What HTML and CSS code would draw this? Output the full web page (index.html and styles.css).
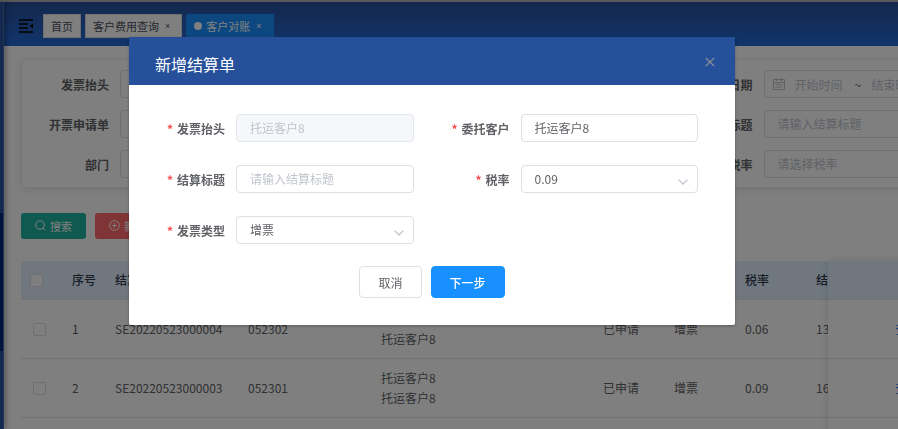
FILE: index.html
```html
<!DOCTYPE html>
<html lang="zh-CN">
<head>
    <meta charset="UTF-8">
    <meta name="viewport" content="width=device-width, initial-scale=1.0">
    <title>客户对账</title>
    <link rel="stylesheet" href="styles.css">
</head>
<body>
    <div class="app">
        <div class="sidebar">
            <div class="sidebar-top"></div>
            <div class="sidebar-open"></div>
        </div>

        <div class="main">
            <!-- Top bar with page tabs -->
            <header class="topbar">
                <svg class="fold-icon" viewBox="0 0 15 14" width="15" height="14">
                    <path d="M0 1h14M0 5h9M0 9h9M0 13h14" stroke="#000" stroke-width="1.6" fill="none"/>
                    <path d="M14 4.5v5L10.5 7z" fill="#000"/>
                </svg>
                <nav class="tabs">
                    <a href="#" class="tab">首页</a>
                    <a href="#" class="tab closable">客户费用查询<span class="tab-close">×</span></a>
                    <a href="#" class="tab closable active"><i class="dot"></i>客户对账<span class="tab-close">×</span></a>
                </nav>
            </header>

            <div class="content">
                <!-- Search form -->
                <form class="search-card">
                    <div class="field"><label for="sTitle">发票抬头</label><input id="sTitle" class="control" type="text"></div>
                    <div class="field"><label for="sCustomer">委托客户</label><input id="sCustomer" class="control" type="text"></div>
                    <div class="field">
                        <label for="sStart">结算日期</label>
                        <div class="control date-range">
                            <svg viewBox="0 0 12 12" width="12" height="12" fill="none" stroke="#c0c4cc">
                                <path d="M.5 1.5h11v10H.5zM.5 4.5h11M3.5 0v3M8.5 0v3M2.5 6.5h7M2.5 9h7" stroke-width="1"/>
                            </svg>
                            <input id="sStart" type="text" placeholder="开始时间">
                            <span>~</span>
                            <input type="text" placeholder="结束时间" aria-label="结束时间">
                        </div>
                    </div>
                    <div class="field"><label for="sApply">开票申请单</label><input id="sApply" class="control" type="text"></div>
                    <div class="field"><label for="sStatus">状态</label><input id="sStatus" class="control" type="text"></div>
                    <div class="field"><label for="sName">结算标题</label><input id="sName" class="control" type="text" placeholder="请输入结算标题"></div>
                    <div class="field"><label for="sDept">部门</label><input id="sDept" class="control" type="text"></div>
                    <div class="field"><label for="sType">发票类型</label><input id="sType" class="control" type="text"></div>
                    <div class="field"><label for="sRate">税率</label><input id="sRate" class="control" type="text" placeholder="请选择税率"></div>
                </form>

                <div class="actions">
                    <button type="button" class="action search">
                        <svg viewBox="0 0 11 11" width="11" height="11" fill="none" stroke="#fff"><circle cx="5" cy="5" r="4.3"/><path d="M8 8l2.3 2.3"/></svg>搜索
                    </button>
                    <button type="button" class="action add">
                        <svg viewBox="0 0 11 11" width="11" height="11" fill="none" stroke="#fff"><circle cx="5.5" cy="5.5" r="4.8"/><path d="M5.5 3.3v4.4M3.3 5.5h4.4"/></svg>新增
                    </button>
                </div>

                <!-- Result table, last column stays fixed -->
                <div class="table-wrap">
                    <div class="table-scroll">
                        <table class="list">
                            <colgroup>
                                <col class="w-check"><col class="w-index"><col class="w-code"><col class="w-code"><col class="w-name">
                                <col class="w-small"><col class="w-small"><col class="w-small"><col class="w-small">
                            </colgroup>
                            <thead>
                                <tr>
                                    <th class="check"><input type="checkbox" aria-label="全选"></th>
                                    <th>序号</th><th>结算单号</th><th>结算标题</th><th>委托客户</th>
                                    <th>状态</th><th>类型</th><th>税率</th><th>结算金额</th>
                                </tr>
                            </thead>
                            <tbody>
                                <tr>
                                    <td class="check"><input type="checkbox" aria-label="选择1"></td>
                                    <td>1</td><td>SE20220523000004</td><td>052302</td><td>托运客户8<br>托运客户8</td>
                                    <td>已申请</td><td>增票</td><td>0.06</td><td>1300</td>
                                </tr>
                                <tr>
                                    <td class="check"><input type="checkbox" aria-label="选择2"></td>
                                    <td>2</td><td>SE20220523000003</td><td>052301</td><td>托运客户8<br>托运客户8</td>
                                    <td>已申请</td><td>增票</td><td>0.09</td><td>1600</td>
                                </tr>
                                <tr><td colspan="9"></td></tr>
                            </tbody>
                        </table>
                    </div>
                    <table class="list fixed">
                        <thead><tr><th aria-label="操作"></th></tr></thead>
                        <tbody>
                            <tr><td><a href="#">查看</a></td></tr>
                            <tr><td><a href="#">查看</a></td></tr>
                            <tr><td></td></tr>
                        </tbody>
                    </table>
                </div>
            </div>
        </div>
    </div>

    <!-- Dialog -->
    <div class="mask">
        <div class="dialog" role="dialog" aria-labelledby="dialogTitle">
            <div class="dialog-header">
                <h2 id="dialogTitle">新增结算单</h2>
                <button type="button" class="dialog-close" aria-label="关闭">
                    <svg viewBox="0 0 10 10" width="10" height="10"><path d="M.8.8l8.4 8.4M9.2.8L.8 9.2" stroke="#909399" stroke-width="1.2" fill="none"/></svg>
                </button>
            </div>
            <form class="dialog-form">
                <div class="field required"><label for="dTitle">发票抬头</label><input id="dTitle" class="control" type="text" value="托运客户8" disabled></div>
                <div class="field required"><label for="dCustomer">委托客户</label><input id="dCustomer" class="control" type="text" value="托运客户8"></div>
                <div class="field required"><label for="dName">结算标题</label><input id="dName" class="control" type="text" placeholder="请输入结算标题"></div>
                <div class="field required">
                    <label for="dRate">税率</label>
                    <div class="select-box">
                        <select id="dRate" class="control"><option>0.09</option><option>0.06</option></select>
                        <svg class="arrow" viewBox="0 0 10 6" width="10" height="6"><path d="M.6.6L5 5 9.4.6" stroke="#c0c4cc" stroke-width="1.3" fill="none"/></svg>
                    </div>
                </div>
                <div class="field required">
                    <label for="dType">发票类型</label>
                    <div class="select-box">
                        <select id="dType" class="control"><option>增票</option></select>
                        <svg class="arrow" viewBox="0 0 10 6" width="10" height="6"><path d="M.6.6L5 5 9.4.6" stroke="#c0c4cc" stroke-width="1.3" fill="none"/></svg>
                    </div>
                </div>
            </form>
            <div class="dialog-footer">
                <button type="button" class="btn">取消</button>
                <button type="button" class="btn primary">下一步</button>
            </div>
        </div>
    </div>
</body>
</html>
```

FILE: styles.css
```css
* {
    box-sizing: border-box;
}
body {
    margin: 0;
    height: 100vh;
    overflow: hidden;
    font-family: "Noto Sans CJK SC", sans-serif;
    font-size: 12px;
    color: #606266;
}
input, select, button {
    font-family: inherit;
    font-size: 12px;
    color: inherit;
}
a {
    text-decoration: none;
}
.app {
    display: flex;
    height: 100vh;
    border-top: 2px solid #b4b4b4;
}

/* sidebar */
.sidebar {
    flex: none;
    display: flex;
    flex-direction: column;
    width: 4px;
    background: #28529e;
    border-right: 1px solid #4668a6;
    box-shadow: 1px 0 6px rgba(0, 0, 0, 0.5);
    z-index: 1;
}
.sidebar-top {
    height: 211px;
}
.sidebar-open {
    height: 138px;
    background: #04247c;
}
.main {
    flex: 1;
    min-width: 0;
    overflow: hidden;
    background: #fff;
}

/* top bar */
.topbar {
    display: flex;
    align-items: center;
    height: 44px;
    padding: 4px 15px 0;
    background: linear-gradient(#28509a, #226ad8);
}
.fold-icon {
    margin-right: 9px;
}
.tabs {
    display: flex;
    gap: 4px;
}
.tab {
    display: flex;
    align-items: center;
    height: 24px;
    padding: 0 7px;
    border: 1px solid #d8dce5;
    background: #fff;
    color: #495060;
    font-size: 11px;
}
.tab.closable {
    padding-right: 11px;
}
.tab.active {
    background: #1890ff;
    border-color: #1890ff;
    color: #fff;
}
.tab-close {
    margin-left: 6px;
    font-family: "Liberation Sans", sans-serif;
    font-size: 9px;
}
.dot {
    width: 8px;
    height: 8px;
    margin-right: 4px;
    border-radius: 50%;
    background: #fff;
}

/* search form */
.content {
    width: 112%;
    padding: 13px 17px;
}
.search-card {
    display: grid;
    grid-template-columns: repeat(3, 1fr);
    row-gap: 12px;
    padding: 10px 0 9px;
    border: 1px solid #ebeef5;
    border-radius: 4px;
    box-shadow: 0 2px 8px rgba(0, 0, 0, 0.1);
}
.field {
    display: flex;
    align-items: center;
    gap: 11px;
}
.field label {
    flex: none;
    width: 87px;
    text-align: right;
    font-weight: 700;
}
.control {
    flex: 1;
    width: 100%;
    min-width: 0;
    height: 28px;
    padding: 0 13px 1px;
    border: 1px solid #dcdfe6;
    border-radius: 4px;
    background: #fff;
}
input::placeholder {
    color: #c0c4cc;
    opacity: 1;
}
.date-range {
    display: flex;
    align-items: center;
    gap: 10px;
    padding: 0 8px;
}
.date-range input {
    width: 50px;
    padding: 0;
    border: none;
}

/* buttons above the table */
.actions {
    display: flex;
    gap: 9px;
    margin: 25px 0 22px;
}
.action {
    display: flex;
    align-items: center;
    gap: 4px;
    height: 26px;
    padding: 0 14px 1px;
    border: none;
    border-radius: 3px;
    color: #fff;
    font-size: 11px;
}
.action.search {
    background: #20b2a0;
}
.action.add {
    background: #ff6b6b;
}

/* table */
.table-wrap {
    display: flex;
}
.table-scroll {
    flex: 1;
    min-width: 0;
    overflow: hidden;
}
.list {
    width: 857px;
    table-layout: fixed;
    border-collapse: separate;
    border-spacing: 0;
    line-height: 20px;
}
.w-check {
    width: 42px;
}
.w-index {
    width: 43px;
}
.w-code {
    width: 133px;
}
.w-name {
    width: 222px;
}
.w-small {
    width: 71px;
}
.list th {
    height: 39px;
    padding: 0 9px;
    border-bottom: 1px solid #dfe6ec;
    background: #e0efff;
    color: #303b4d;
    font-weight: 500;
    text-align: left;
    white-space: nowrap;
}
.list td {
    height: 59px;
    padding: 0 9px;
    border-bottom: 1px solid #dfe6ec;
}
.list .check {
    padding: 0 0 0 9px;
}
.list td.check {
    padding-left: 12px;
}
.list input {
    display: block;
    appearance: none;
    width: 13px;
    height: 13px;
    margin: 0;
    border: 1px solid #dcdfe6;
    border-radius: 2px;
    background: #fff;
}
.list.fixed {
    flex: none;
    width: 160px;
    background: #fff;
    box-shadow: 0 0 8px rgba(0, 0, 0, 0.14);
}
.list.fixed td {
    padding: 0 11px 0 9px;
    text-align: center;
}
.list a {
    color: #1c6fe0;
}

/* dialog */
.mask {
    position: fixed;
    inset: 0;
    z-index: 10;
    padding: 37px 163px 0 129px;
    background: rgba(0, 0, 0, 0.5);
}
.dialog {
    border-radius: 2px;
    background: #fff;
    box-shadow: 0 1px 3px rgba(0, 0, 0, 0.3);
}
.dialog-header {
    display: flex;
    align-items: center;
    justify-content: space-between;
    height: 48px;
    padding: 6px 20px 0 26px;
    background: #26519a;
}
.dialog-header h2 {
    margin: 0;
    font-size: 16px;
    font-weight: 400;
    color: #fff;
}
.dialog-close {
    display: flex;
    padding: 0 0 4px;
    border: none;
    background: none;
}
.dialog-form {
    display: grid;
    grid-template-columns: repeat(2, 1fr);
    row-gap: 23px;
    padding: 29px 37px 0 0;
}
.dialog-form .field label {
    width: 96px;
}
.required label::before {
    content: "*";
    margin-right: 4px;
    color: #ff4949;
}
.control:disabled {
    background: #f5f7fa;
    border-color: #e4e7ed;
    color: #c0c4cc;
}
.select-box {
    position: relative;
    display: flex;
    flex: 1;
    min-width: 0;
}
select.control {
    appearance: none;
}
.arrow {
    position: absolute;
    right: 10px;
    top: 14px;
    pointer-events: none;
}
.dialog-footer {
    display: flex;
    justify-content: center;
    gap: 9px;
    padding: 22px 0 27px;
}
.btn {
    height: 32px;
    padding: 0 18px;
    border: 1px solid #dcdfe6;
    border-radius: 4px;
    background: #fff;
}
.btn.primary {
    border-color: #1890ff;
    background: #1890ff;
    color: #fff;
    font-weight: 500;
}
```
